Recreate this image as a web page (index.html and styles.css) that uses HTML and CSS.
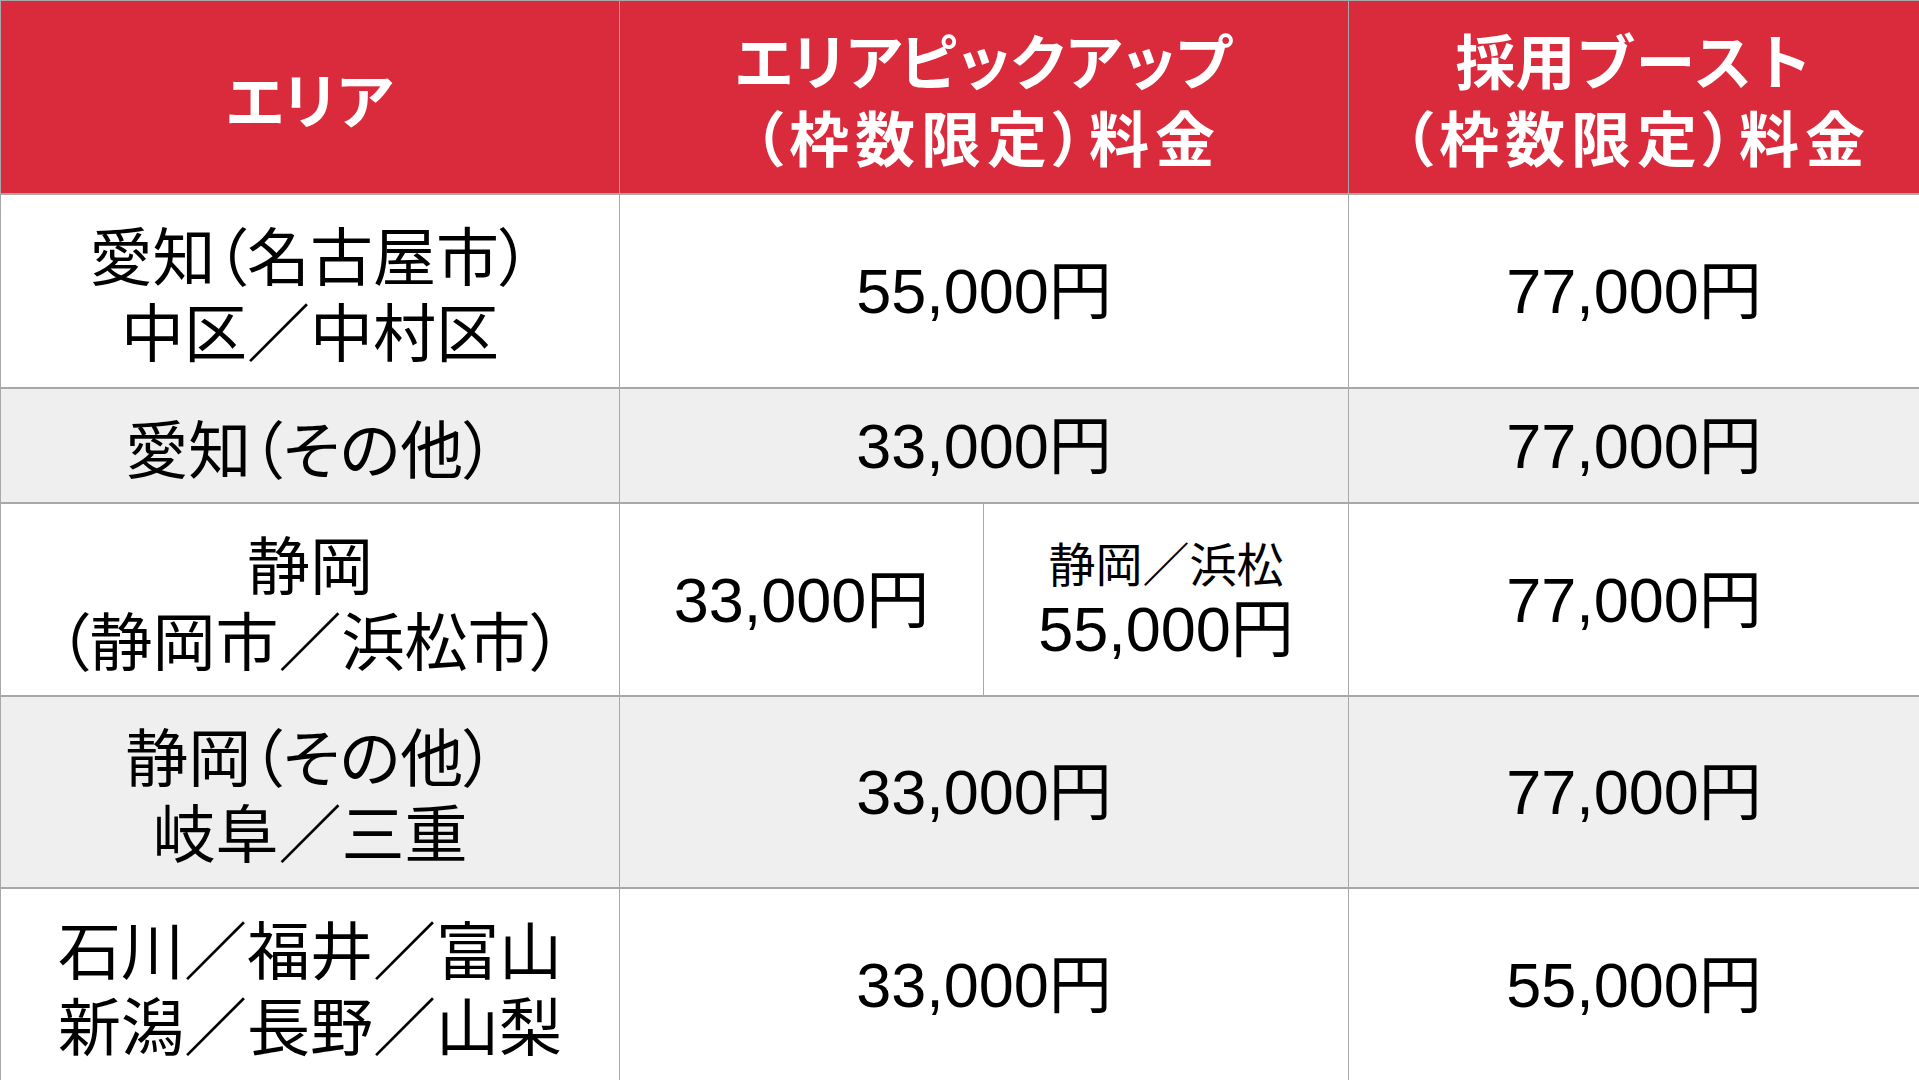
FILE: index.html
```html
<!DOCTYPE html>
<html lang="ja">
<head>
<meta charset="utf-8">
<title>料金表</title>
<link rel="stylesheet" href="styles.css">
</head>
<body>
<div class="table">
  <div class="cell head"><span class="tight">エリア</span></div>
  <div class="cell head span2"><span class="lines"><span class="tight">エリアピックアップ</span><span class="wide">（枠数限定）料金</span></span></div>
  <div class="cell head"><span class="lines"><span>採用ブースト</span><span class="wide">（枠数限定）料金</span></span></div>

  <div class="cell area"><span class="lines"><span>愛知（名古屋市）</span><span>中区／中村区</span></span></div>
  <div class="cell price span2">55,000円</div>
  <div class="cell price">77,000円</div>

  <div class="cell area alt">愛知（その他）</div>
  <div class="cell price alt span2">33,000円</div>
  <div class="cell price alt">77,000円</div>

  <div class="cell area"><span class="lines"><span>静岡</span><span>（静岡市／浜松市）</span></span></div>
  <div class="cell price">33,000円</div>
  <div class="cell price stack"><span class="note">静岡／浜松</span><span>55,000円</span></div>
  <div class="cell price">77,000円</div>

  <div class="cell area alt"><span class="lines"><span>静岡（その他）</span><span>岐阜／三重</span></span></div>
  <div class="cell price alt span2">33,000円</div>
  <div class="cell price alt">77,000円</div>

  <div class="cell area"><span class="lines"><span>石川／福井／富山</span><span>新潟／長野／山梨</span></span></div>
  <div class="cell price span2">33,000円</div>
  <div class="cell price">55,000円</div>
</div>
</body>
</html>
```

FILE: styles.css
```css
html, body {
  margin: 0;
  padding: 0;
  background: #ffffff;
}

body {
  width: 1919px;
  height: 1080px;
  overflow: hidden;
  font-family: "Liberation Sans", "Noto Sans CJK JP", sans-serif;
  color: #000000;
}

.table {
  display: grid;
  grid-template-columns: 618px 363px 364px 1fr;
  grid-template-rows: 192px 192px 113px 191px 190px 1fr;
  column-gap: 1px;
  row-gap: 2px;
  height: 1079px;
  background: #a8a8a8;
  border-top: 1px solid #a8a8a8;
  border-left: 1px solid #a8a8a8;
}

.cell {
  display: flex;
  align-items: center;
  justify-content: center;
  text-align: center;
  background: #ffffff;
}

.span2 {
  grid-column: span 2;
}

.lines {
  display: flex;
  flex-direction: column;
  align-items: center;
}

.head {
  background: #d92b3b;
  color: #ffffff;
  font-family: "Noto Sans CJK JP", sans-serif;
  font-weight: 700;
  font-size: 60px;
  line-height: 77px;
}

.tight {
  letter-spacing: -5px;
  padding-right: 5px;
}

.wide {
  font-feature-settings: "palt";
  letter-spacing: 6px;
  padding-left: 6px;
}

.area {
  font-family: "Noto Sans CJK JP", sans-serif;
  font-feature-settings: "palt";
  font-size: 63px;
  line-height: 76px;
}

.price {
  font-size: 63px;
  line-height: 76px;
}

.alt {
  background: #efefef;
}

.stack {
  flex-direction: column;
}

.note {
  font-family: "Noto Sans CJK JP", sans-serif;
  font-size: 47px;
  line-height: 58px;
}
```
